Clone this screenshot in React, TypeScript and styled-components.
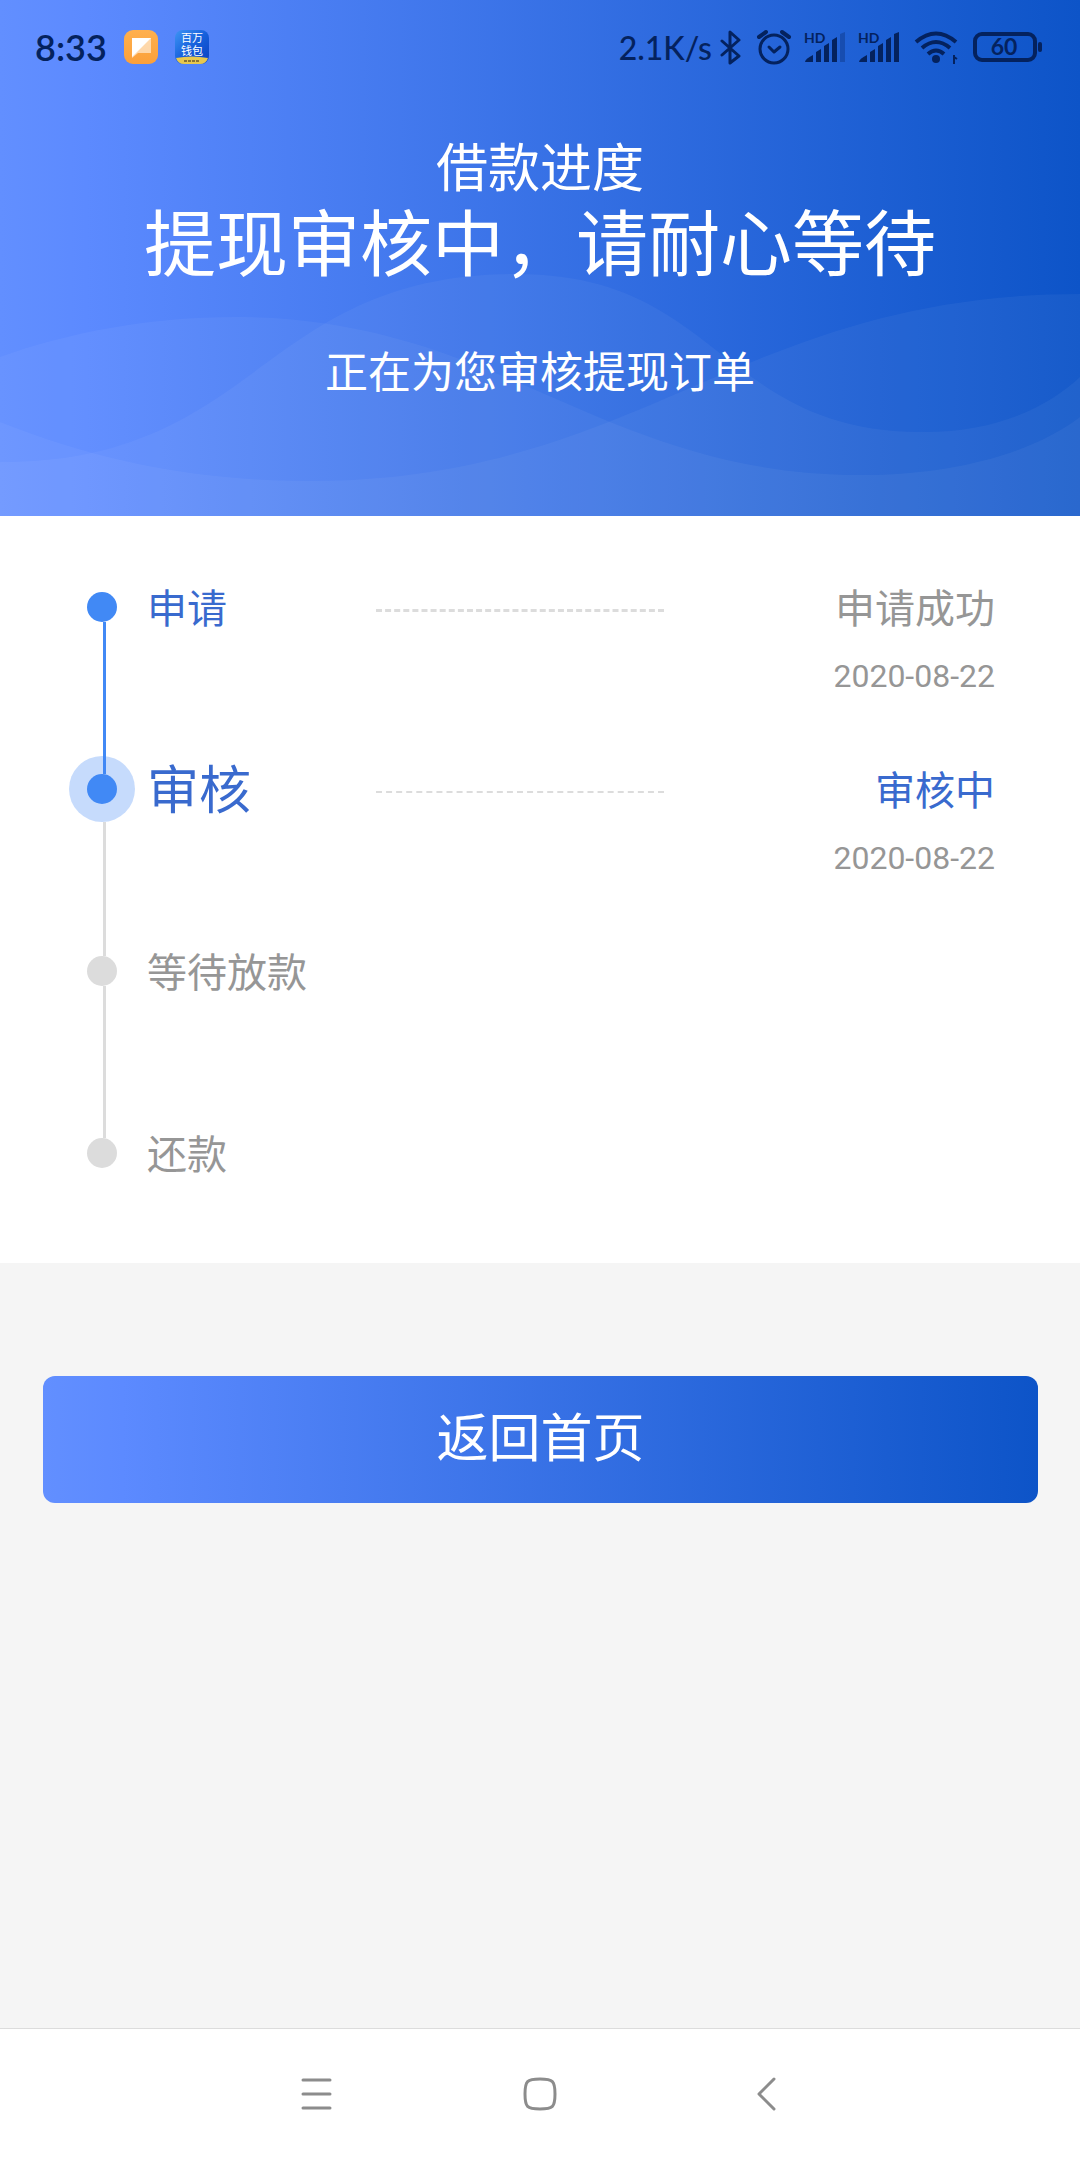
import React from "react";
import styled, { createGlobalStyle, css } from "styled-components";

const BLUE = "#396ace";
const DOT_BLUE = "#4189f5";
const GREY = "#969696";
const LINE_GREY = "#dcdcdc";
const INK = "#04225e";
const GRADIENT = "linear-gradient(90deg, #628fff 0%, #5c8aff 8%, #0d54c8 100%)";

const GlobalStyle = createGlobalStyle`
  * { box-sizing: border-box; }
  body {
    margin: 0;
    background: #f5f5f5;
    font-family: Roboto, "Noto Sans CJK SC", sans-serif;
  }
  h1, h2, p, ol { margin: 0; padding: 0; font-weight: 400; }
  button { border: 0; padding: 0; font-family: inherit; cursor: pointer; }
`;

const Screen = styled.div`
  display: flex;
  flex-direction: column;
  min-height: 100vh;
`;

const Header = styled.header`
  display: grid;
  background: ${GRADIENT};
  color: #fff;
  > * { grid-area: 1 / 1; }
`;

const Waves = styled.svg`
  width: 100%;
  height: 100%;
`;

const HeaderContent = styled.div`
  padding-bottom: 113px;
  text-align: center;
`;

const StatusBar = styled.div`
  display: flex;
  justify-content: space-between;
  align-items: center;
  height: 94px;
  padding: 0 38px 0 35px;
  margin-bottom: 44px;
  color: ${INK};
  font-family: Lato, sans-serif;
`;

const StatusGroup = styled.div<{ $gap: number }>`
  display: flex;
  align-items: center;
  gap: ${(p) => p.$gap}px;
`;

const Clock = styled.time`
  font-size: 36px;
  font-weight: 600;
`;

const Speed = styled.span`
  font-size: 32px;
  font-weight: 500;
`;

const Title = styled.h1`
  font-size: 52px;
  line-height: 64px;
`;

const Headline = styled.h2`
  font-size: 72px;
  line-height: 88px;
`;

const Subtitle = styled.p`
  margin-top: 53px;
  font-size: 43px;
  line-height: 60px;
`;

const Steps = styled.ol`
  padding: 61px 85px 74px 87px;
  background: #fff;
  list-style: none;
`;

const StepRow = styled.li`
  display: grid;
  grid-template-columns: 60px 27fr 34fr 39fr;
  min-height: 182px;
  &:last-child { min-height: 66px; }
`;

const Rail = styled.div`
  display: flex;
  flex-direction: column;
`;

const Segment = styled.span<{ $color: string; $lead?: boolean; $clear?: boolean }>`
  width: 3px;
  margin-left: 16px;
  background: ${(p) => p.$color};
  ${(p) => (p.$lead ? css`height: 15px;` : css`flex: 1;`)}
  ${(p) => p.$clear && css`margin-top: 18px;`}
`;

const Dot = styled.span<{ $color: string; $halo?: boolean }>`
  width: 30px;
  height: 30px;
  border-radius: 50%;
  background: ${(p) => p.$color};
  ${(p) => p.$halo && css`box-shadow: 0 0 0 18px rgba(65, 137, 245, 0.3);`}
`;

const StepName = styled.span<{ $on: boolean; $current: boolean }>`
  color: ${(p) => (p.$on ? BLUE : GREY)};
  font-size: ${(p) => (p.$current ? 52 : 40)}px;
  line-height: 66px;
`;

const Dashes = styled.span<{ $weight: number }>`
  height: 0;
  margin-top: 32px;
  border-top: ${(p) => p.$weight}px dashed ${LINE_GREY};
`;

const Result = styled.div`
  display: flex;
  flex-direction: column;
  gap: 15px;
  text-align: right;
`;

const ResultText = styled.span<{ $current: boolean }>`
  color: ${(p) => (p.$current ? BLUE : GREY)};
  font-size: 40px;
  line-height: 66px;
`;

const ResultDate = styled.time`
  color: ${GREY};
  font-size: 32px;
  line-height: 36px;
`;

const Actions = styled.div`
  flex: 1;
  padding: 113px 42px 0 43px;
`;

const HomeButton = styled.button`
  width: 100%;
  height: 127px;
  border-radius: 12px;
  background: ${GRADIENT};
  color: #fff;
  font-size: 52px;
  line-height: 64px;
`;

const NavBar = styled.nav`
  display: flex;
  justify-content: center;
  align-items: center;
  gap: 177px;
  height: 130px;
  border-top: 1px solid #dcdcdc;
  background: #fff;
`;

const NavButton = styled.button`
  display: flex;
  justify-content: center;
  width: 48px;
  background: none;
`;

type Step = { name: string; on: boolean; current: boolean; result?: string; date?: string };

const steps: Step[] = [
  { name: "申请", on: true, current: false, result: "申请成功", date: "2020-08-22" },
  { name: "审核", on: true, current: true, result: "审核中", date: "2020-08-22" },
  { name: "等待放款", on: false, current: false },
  { name: "还款", on: false, current: false },
];

const NoteIcon = () => (
  <svg width="34" height="34" viewBox="0 0 34 34">
    <defs>
      <linearGradient id="note" x1="0" y1="0" x2="0" y2="1">
        <stop offset="0" stopColor="#ffb04e" />
        <stop offset="1" stopColor="#fba03a" />
      </linearGradient>
    </defs>
    <rect width="34" height="34" rx="9" fill="url(#note)" />
    <path d="M8 8h19v15H14l-6 5z" fill="#fff" opacity=".55" />
    <path d="M8 8h19L8 27z" fill="#fff" />
  </svg>
);

const WalletIcon = () => (
  <svg width="34" height="34" viewBox="0 0 34 34">
    <defs>
      <linearGradient id="wallet" x1="0" y1="0" x2="1" y2="1">
        <stop offset="0" stopColor="#3f95f4" />
        <stop offset="0.5" stopColor="#1660dc" />
        <stop offset="1" stopColor="#0b3fc0" />
      </linearGradient>
    </defs>
    <rect width="34" height="34" rx="8" fill="url(#wallet)" />
    <path d="M1 28q16-3 32 0q-2 6-8 6H9q-6 0-8-6z" fill="#e8c84e" />
    <path d="M9 31h16" stroke="#8a7434" strokeWidth="2" strokeDasharray="3 1" />
    <g fill="#fff" fontFamily="Noto Sans CJK SC, sans-serif" fontSize="11" textAnchor="middle">
      <text x="17" y="12">百万</text>
      <text x="17" y="25">钱包</text>
    </g>
  </svg>
);

const BluetoothIcon = () => (
  <svg width="24" height="36" viewBox="0 0 24 36" fill="none" stroke={INK} strokeWidth="3" strokeLinejoin="round" strokeLinecap="round">
    <path d="M2 12l17 15-9 7V3l9 8L2 26" />
  </svg>
);

const AlarmIcon = () => (
  <svg width="36" height="36" viewBox="0 0 36 36" fill="none" stroke={INK} strokeWidth="3" strokeLinecap="round" strokeLinejoin="round">
    <circle cx="18" cy="20" r="14" />
    <path d="M13 18l5 5 6-5" />
    <path d="M3 8l7-5M33 8l-7-5" strokeWidth="4" />
  </svg>
);

const SignalIcon = ({ full }: { full: boolean }) => (
  <svg width="42" height="36" viewBox="0 0 42 36" fill={INK}>
    <text x="0" y="14" fontFamily="Lato, sans-serif" fontSize="14" fontWeight="700">HD</text>
    <path d="M1 33q0-3 8-7v7zM12 23l5-3v13h-5zM20 17l5-3v19h-5zM28 11l5-3v25h-5z" />
    <path d="M36 5l5-2v30h-5z" opacity={full ? 1 : 0.3} />
  </svg>
);

const WifiIcon = () => (
  <svg width="48" height="36" viewBox="0 0 48 36" fill="none" stroke={INK} strokeWidth="4">
    <path d="M4 13q20-17 40 0M10 19q14-12 28 0M16 25q8-7 16 0" />
    <circle cx="24" cy="30" r="4" fill={INK} stroke="none" />
    <path d="M42 26v9M42 28l3 2" strokeWidth="2" />
  </svg>
);

const BatteryIcon = () => (
  <svg width="70" height="32" viewBox="0 0 70 32">
    <rect x="3" y="3" width="60" height="26" rx="7" fill="none" stroke={INK} strokeWidth="4" />
    <rect x="66" y="11" width="4" height="10" rx="2" fill={INK} />
    <text x="32" y="24" fontFamily="Lato, sans-serif" fontSize="23" fontWeight="700" textAnchor="middle" fill={INK}>60</text>
  </svg>
);

const HeaderWaves = () => (
  <Waves viewBox="0 0 1080 516" preserveAspectRatio="none" fill="#fff" fillOpacity=".045" aria-hidden>
    <path d="M0 462C260 462 260 274 517 274C720 274 720 432 923 432C1000 432 1050 405 1080 377V516H0z" />
    <path d="M0 357C70 332 150 317 234 317C500 317 600 475 861 475C950 475 1030 455 1080 417V516H0z" />
    <path d="M0 422C100 462 200 481 310 481C640 481 740 294 1080 294V516H0z" />
  </Waves>
);

export default function App() {
  return (
    <Screen>
      <GlobalStyle />
      <Header>
        <HeaderWaves />
        <HeaderContent>
          <StatusBar>
            <StatusGroup $gap={17}>
              <Clock>8:33</Clock>
              <NoteIcon />
              <WalletIcon />
            </StatusGroup>
            <StatusGroup $gap={12}>
              <StatusGroup $gap={8}>
                <Speed>2.1K/s</Speed>
                <BluetoothIcon />
              </StatusGroup>
              <AlarmIcon />
              <SignalIcon full={false} />
              <SignalIcon full />
              <WifiIcon />
              <BatteryIcon />
            </StatusGroup>
          </StatusBar>
          <Title>借款进度</Title>
          <Headline>提现审核中，请耐心等待</Headline>
          <Subtitle>正在为您审核提现订单</Subtitle>
        </HeaderContent>
      </Header>
      <Steps>
        {steps.map((step, i) => {
          const next = steps[i + 1];
          return (
            <StepRow key={step.name}>
              <Rail>
                <Segment $lead $color={i === 0 ? "transparent" : step.on ? DOT_BLUE : LINE_GREY} />
                <Dot $color={step.on ? DOT_BLUE : LINE_GREY} $halo={step.current} />
                {next && <Segment $color={next.on ? DOT_BLUE : LINE_GREY} $clear={step.current} />}
              </Rail>
              <StepName $on={step.on} $current={step.current}>{step.name}</StepName>
              {step.result && (
                <>
                  <Dashes $weight={step.current ? 2 : 3} />
                  <Result>
                    <ResultText $current={step.current}>{step.result}</ResultText>
                    <ResultDate>{step.date}</ResultDate>
                  </Result>
                </>
              )}
            </StepRow>
          );
        })}
      </Steps>
      <Actions>
        <HomeButton type="button">返回首页</HomeButton>
      </Actions>
      <NavBar>
        <NavButton type="button" aria-label="菜单">
          <svg width="36" height="34" viewBox="0 0 36 34" stroke="#8c8c8c" strokeWidth="3" strokeLinecap="round">
            <path d="M6 3h27M6 17h27M6 31h27" />
          </svg>
        </NavButton>
        <NavButton type="button" aria-label="主页">
          <svg width="34" height="34" viewBox="0 0 34 34" fill="none" stroke="#8c8c8c" strokeWidth="3">
            <path d="M17 2C30 2 32 4 32 17S30 32 17 32 2 30 2 17 4 2 17 2z" />
          </svg>
        </NavButton>
        <NavButton type="button" aria-label="返回">
          <svg width="24" height="34" viewBox="0 0 24 34" fill="none" stroke="#8c8c8c" strokeWidth="3" strokeLinecap="round" strokeLinejoin="round">
            <path d="M21 2L6 17l15 15" />
          </svg>
        </NavButton>
      </NavBar>
    </Screen>
  );
}
